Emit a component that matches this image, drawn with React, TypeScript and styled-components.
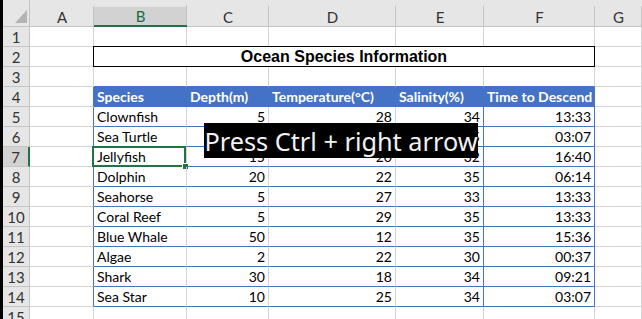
import React from 'react';
import styled, { createGlobalStyle, css } from 'styled-components';

const GRID = '#d4d4d4';
const BLUE = '#4472c4';
const GREEN = '#217346';
const HEAD_BG = '#e6e6e6';
const HEAD_SEL = '#d2d2d2';
const HEAD_LINE = '#c4c4c4';

const Global = createGlobalStyle`
  html, body { margin: 0; padding: 0; background: #fff; overflow: hidden; }
  body { width: 642px; height: 319px; }
`;

const Sheet = styled.div`
  position: relative;
  display: grid;
  grid-template-columns: 3px 27px 64px 93px 82px 127px 88px 111px 1fr;
  grid-template-rows: 27px repeat(15, 20px);
  width: 642px;
  height: 319px;
  overflow: hidden;
  font-family: Lato, 'Liberation Sans', sans-serif;
  font-size: 14px;
  color: #000;
`;

const Edge = styled.div`
  grid-column: 1;
  grid-row: 1 / -1;
  background: #000;
`;

const Corner = styled.div`
  position: relative;
  background: ${HEAD_BG};
  border-right: 1px solid ${HEAD_LINE};
  border-bottom: 1px solid ${HEAD_LINE};
  &::after {
    content: '';
    position: absolute;
    left: 12px;
    top: 10px;
    width: 12px;
    height: 13px;
    background: #b4b4b4;
    clip-path: polygon(100% 0, 100% 100%, 0 100%);
  }
`;

const ColHead = styled.div<{ $sel?: boolean }>`
  box-sizing: border-box;
  padding-top: 7px;
  display: flex;
  align-items: center;
  justify-content: center;
  font-size: 15px;
  color: ${(p) => (p.$sel ? '#1d6b40' : '#333')};
  background:
    linear-gradient(${HEAD_LINE}, ${HEAD_LINE}) right bottom / 1px 20px no-repeat,
    linear-gradient(to bottom, ${HEAD_BG} 7px, ${(p) => (p.$sel ? HEAD_SEL : HEAD_BG)} 7px);
  border-bottom: ${(p) => (p.$sel ? `2px solid ${GREEN}` : `1px solid ${HEAD_LINE}`)};
`;

const RowHead = styled.div<{ $sel?: boolean }>`
  box-sizing: border-box;
  display: flex;
  align-items: center;
  justify-content: center;
  padding-top: 1px;
  font-size: 15px;
  color: #333;
  background: ${(p) => (p.$sel ? HEAD_SEL : HEAD_BG)};
  border-bottom: 1px solid ${HEAD_LINE};
  border-right: ${(p) => (p.$sel ? `2px solid ${GREEN}` : `1px solid ${HEAD_LINE}`)};
`;

const Cell = styled.div<{ $align?: 'left' | 'right'; $head?: boolean; $right: string; $bottom: string }>`
  position: relative;
  box-sizing: border-box;
  display: flex;
  align-items: flex-end;
  justify-content: ${(p) => (p.$align === 'right' ? 'flex-end' : 'flex-start')};
  padding: 0 3px 0 3px;
  line-height: 19px;
  white-space: nowrap;
  border-right: 1px solid ${(p) => p.$right};
  border-bottom: 1px solid ${(p) => p.$bottom};
  ${(p) =>
    p.$head &&
    css`
      background: ${BLUE};
      color: #fff;
      font-weight: 700;
    `}
`;

const Title = styled.div`
  position: relative;
  z-index: 1;
  grid-column: 4 / 9;
  margin: -1px 0 0 -1px;
  border: 1px solid #000;
  display: flex;
  align-items: center;
  justify-content: center;
  padding-top: 1px;
  font-family: 'Liberation Sans', Arial, sans-serif;
  font-weight: 700;
  font-size: 16px;
  background: #fff;
`;

const Selection = styled.div`
  position: absolute;
  top: -1px;
  left: -2px;
  right: 0;
  bottom: -1px;
  border: 2px solid ${GREEN};
  pointer-events: none;
`;

const Handle = styled.div`
  position: absolute;
  right: -4px;
  bottom: -4px;
  width: 5px;
  height: 5px;
  background: ${GREEN};
  box-shadow: 0 0 0 1px #fff;
`;

const KeyCast = styled.div`
  position: absolute;
  left: 204px;
  top: 123px;
  width: 274px;
  height: 35px;
  z-index: 5;
  background: #000;
  color: #f2f2f2;
  display: flex;
  align-items: center;
  justify-content: center;
  font-family: 'Noto Sans', 'Open Sans', sans-serif;
  font-size: 25.3px;
  white-space: nowrap;
`;

const COLS = ['A', 'B', 'C', 'D', 'E', 'F', 'G'];

const HEADERS = ['Species', 'Depth(m)', 'Temperature(°C)', 'Salinity(%)', 'Time to Descend'];

const SPECIES: [string, number, number, number, string][] = [
  ['Clownfish', 5, 28, 34, '13:33'],
  ['Sea Turtle', 10, 25, 35, '03:07'],
  ['Jellyfish', 15, 20, 32, '16:40'],
  ['Dolphin', 20, 22, 35, '06:14'],
  ['Seahorse', 5, 27, 33, '13:33'],
  ['Coral Reef', 5, 29, 35, '13:33'],
  ['Blue Whale', 50, 12, 35, '15:36'],
  ['Algae', 2, 22, 30, '00:37'],
  ['Shark', 30, 18, 34, '09:21'],
  ['Sea Star', 10, 25, 34, '03:07'],
];

const SEL_ROW = 7;
const SEL_COL = 1;

function cellContent(row: number, col: number): { text: string; align: 'left' | 'right'; head: boolean } {
  if (row === 4 && col >= 1 && col <= 5) return { text: HEADERS[col - 1], align: 'left', head: true };
  if (row >= 5 && row <= 14 && col >= 1 && col <= 5) {
    const v = SPECIES[row - 5][col - 1];
    return { text: String(v), align: col === 1 ? 'left' : 'right', head: false };
  }
  return { text: '', align: 'left', head: false };
}

function borders(row: number, col: number): { right: string; bottom: string } {
  const inTableRows = row >= 4 && row <= 14;
  const inTableCols = col >= 1 && col <= 5;
  let right = GRID;
  let bottom = GRID;
  if (inTableRows) {
    if (col === 0 || col === 4 || col === 5) right = BLUE;
    if (row === 4 && inTableCols) right = BLUE;
  }
  if (row >= 3 && row <= 14 && inTableCols) bottom = BLUE;
  return { right, bottom };
}

export default function App() {
  const rows = Array.from({ length: 15 }, (_, i) => i + 1);
  return (
    <>
      <Global />
      <Sheet>
        <Edge />
        <Corner />
        {COLS.map((c, i) => (
          <ColHead key={c} $sel={i === SEL_COL}>
            {c}
          </ColHead>
        ))}
        {rows.map((r) => (
          <React.Fragment key={r}>
            <RowHead $sel={r === SEL_ROW}>{r}</RowHead>
            {COLS.map((c, col) => {
              if (r === 2 && col === 1) return <Title key={c}>Ocean Species Information</Title>;
              if (r === 2 && col >= 2 && col <= 5) return null;
              const { text, align, head } = cellContent(r, col);
              const { right, bottom } = borders(r, col);
              const selected = r === SEL_ROW && col === SEL_COL;
              return (
                <Cell key={c} $align={align} $head={head} $right={right} $bottom={bottom}>
                  {text}
                  {selected && (
                    <Selection>
                      <Handle />
                    </Selection>
                  )}
                </Cell>
              );
            })}
          </React.Fragment>
        ))}
        <KeyCast>Press Ctrl + right arrow</KeyCast>
      </Sheet>
    </>
  );
}
